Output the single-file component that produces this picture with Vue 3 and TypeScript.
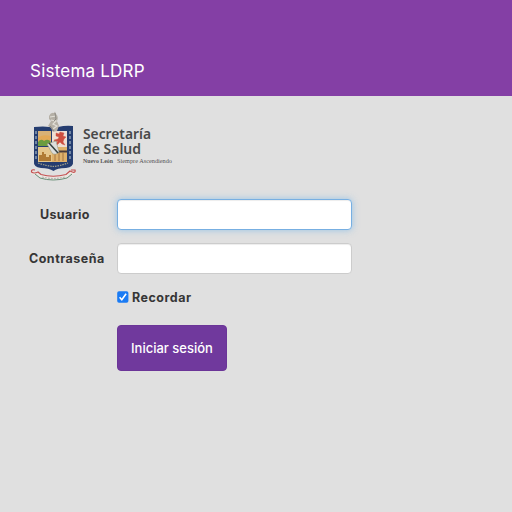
<script setup lang="ts">
import { onMounted, ref } from 'vue'

const user = ref('')
const password = ref('')
const remember = ref(true)
const userInput = ref<HTMLInputElement | null>(null)

onMounted(() => userInput.value?.focus())
</script>

<template>
  <div class="page">
    <header class="topbar">
      <h1 class="title">Sistema LDRP</h1>
    </header>
    <main class="content">
      <svg class="logo" width="150" height="74" viewBox="28 109 150 74" role="img">
        <!-- shield -->
        <path d="M34 127Q44 126 49 127H58Q66 125 73 126V161Q74 167 66 168Q57 168 53.5 171Q49 168 41 168Q33 167 34 161Z" fill="#253d70" />
        <path d="M38 131H51V146H38Z" fill="#d8b176" />
        <path d="M38 138Q42 134 51 136V141H38Z" fill="#e2a957" />
        <path d="M38 142Q41 138 44 141Q48 138 51 142V146H38Z" fill="#6b9c3e" />
        <path d="M52 131H67V147H52Z" fill="#efded2" />
        <path d="M56 133l3 1 1-2 4 1-1 3 3 1-2 2-1 3 2 3-3-1-2-2-3 3-1-1 2-3-3 1-1-2 4-1 1-2-3-1z" fill="#cd4e40" stroke="#cd4e40" stroke-width=".4" />
        <path d="M38 147H52V162H38Z" fill="#e4c68c" />
        <path d="M39 161V155H42V152H44V154H46V157H49V155H51V161Z" fill="#af7b35" />
        <path d="M52 147H67V162H52Z" fill="#dfb16b" />
        <path d="M52 150.5H67V152.5H52Z" fill="#4b3b38" />
        <path d="M55 153V161M59 153V161M63 153V161" fill="none" stroke="#a57540" />
        <path d="M47 144L56 141L59 152Q55 156 52 153Z" fill="#dddedc" stroke="#99977d" stroke-width=".6" />
        <path d="M49 143L58 153" stroke="#35403f" stroke-width="1.5" />
        <path d="M36 131V160M70 131V160" fill="none" stroke="#8b9eb4" stroke-width="1.5" stroke-dasharray="3 2" />
        <path d="M38 163Q47 166 53 166.5Q60 166 68 163" fill="none" stroke="#a2a18a" stroke-width="1.2" stroke-dasharray="1.5 1" />
        <!-- helmet -->
        <path d="M49 116Q51 112 54 113L55 111.5L56 114Q59 117 57 121L59 126L57 131L53 132L51 128L48 126L51 121L49 119Z" fill="#b5b0a6" />
        <path d="M50 117L56 116M51 120L56 121L53 124L57 126L53 129" fill="none" stroke="#e2dfd7" stroke-width="1.2" />
        <path d="M55 113L56 119L54 121M50 126L54 131" fill="none" stroke="#807e79" stroke-width=".8" />
        <!-- ribbon -->
        <path d="M33 171Q32 174 37 173L41 176Q53 181 66 176L70 173Q75 174 74 171" fill="none" stroke="#ebe7e2" stroke-width="3.5" />
        <path d="M35 170Q31 169 31.5 172Q34 174 38 172L41 174.5Q53 178 66 174.5L70 171Q76 174 75 170L71 170" fill="none" stroke="#c44f50" stroke-width="1.2" />
        <path d="M35 174L40 178Q53 182 67 178L72 174" fill="none" stroke="#688f78" stroke-width="1" />
        <path d="M42 177Q53 180 65 177" fill="none" stroke="#bab6b1" stroke-width="1.2" stroke-dasharray="2 1" />
        <text class="brand" x="83" y="139" textLength="68" lengthAdjust="spacingAndGlyphs">Secretaría</text>
        <text class="brand" x="83" y="153.8" textLength="58" lengthAdjust="spacingAndGlyphs">de Salud</text>
        <text class="motto strong" x="83" y="163.3" textLength="30" lengthAdjust="spacingAndGlyphs">Nuevo León</text>
        <text class="motto" x="117" y="163.3" textLength="55" lengthAdjust="spacingAndGlyphs">Siempre Ascendiendo</text>
      </svg>
      <form class="form" @submit.prevent>
        <label class="label user-label" for="user">Usuario</label>
        <input id="user" ref="userInput" v-model="user" class="field active" type="text" />
        <label class="label pass-label" for="password">Contraseña</label>
        <input id="password" v-model="password" class="field" type="password" />
        <label class="remember">
          <input v-model="remember" class="native" type="checkbox" />
          <svg class="check" width="12" height="12" viewBox="0 0 12 12">
            <rect x=".2" y=".2" width="11.2" height="11.6" rx="1.8" fill="#1a7bf4" />
            <path v-if="remember" d="M2.6 6.3L4.8 8.7L9.1 2.8" fill="none" stroke="#fff" stroke-width="1.6" />
          </svg>
          <span class="label remember-label">Recordar</span>
        </label>
        <button class="submit" type="submit"><span>Iniciar sesión</span></button>
      </form>
    </main>
  </div>
</template>

<style>
body {
  margin: 0;
  background: #e0e0e0;
}
</style>

<style scoped>
.page {
  min-height: 512px;
  background: #e0e0e0;
  font-family: Inter, "Liberation Sans", sans-serif;
}
.topbar {
  box-sizing: border-box;
  height: 96px;
  padding: 60px 30px 0;
  background: #843fa5;
}
.title {
  margin: 0;
  color: #fff;
  font-size: 17px;
  font-weight: 400;
  line-height: 22px;
  letter-spacing: .22px;
}
.content {
  padding: 13px 28px 0;
}
.logo {
  display: block;
}
.brand {
  font: 600 13.5px "Noto Sans", sans-serif;
  fill: #484848;
}
.motto {
  font: 400 5.2px "Liberation Serif", serif;
  fill: #555;
}
.strong {
  font-weight: 700;
}
.form {
  display: grid;
  grid-template-columns: 78px 235px;
  column-gap: 11px;
  padding-top: 16px;
}
.label {
  color: #363636;
  font-size: 12.5px;
  font-weight: 700;
  line-height: 31px;
  white-space: nowrap;
}
.user-label {
  padding-left: 12px;
  letter-spacing: .35px;
}
.pass-label {
  padding-left: 1px;
  letter-spacing: .48px;
}
.field {
  box-sizing: border-box;
  width: 235px;
  height: 31px;
  margin: 0 0 13px;
  padding: 5px 10px;
  border: 1px solid #ccc;
  border-radius: 4px;
  outline: none;
  background: #fff;
  caret-color: transparent;
  font: inherit;
  font-size: 13px;
  box-shadow: inset 0 1px 1px rgba(0, 0, 0, .075);
}
.active {
  border-color: #77afe2;
  box-shadow: inset 0 1px 1px rgba(0, 0, 0, .075), 0 0 7px rgba(102, 175, 233, .6);
}
.remember {
  grid-column: 2;
  display: flex;
  align-items: center;
  gap: 3px;
  height: 21px;
}
.native {
  position: absolute;
  opacity: 0;
  pointer-events: none;
}
.check {
  flex: none;
  margin-bottom: 2px;
}
.remember-label {
  line-height: 20px;
  letter-spacing: .5px;
}
.submit {
  grid-column: 2;
  width: 110px;
  height: 46px;
  margin: 17px 0 0;
  padding: 0;
  border: 1px solid #6b3598;
  border-radius: 4px;
  background: #70399d;
  color: #fff;
  font: 450 13px Inter, sans-serif;
  white-space: nowrap;
}
</style>
